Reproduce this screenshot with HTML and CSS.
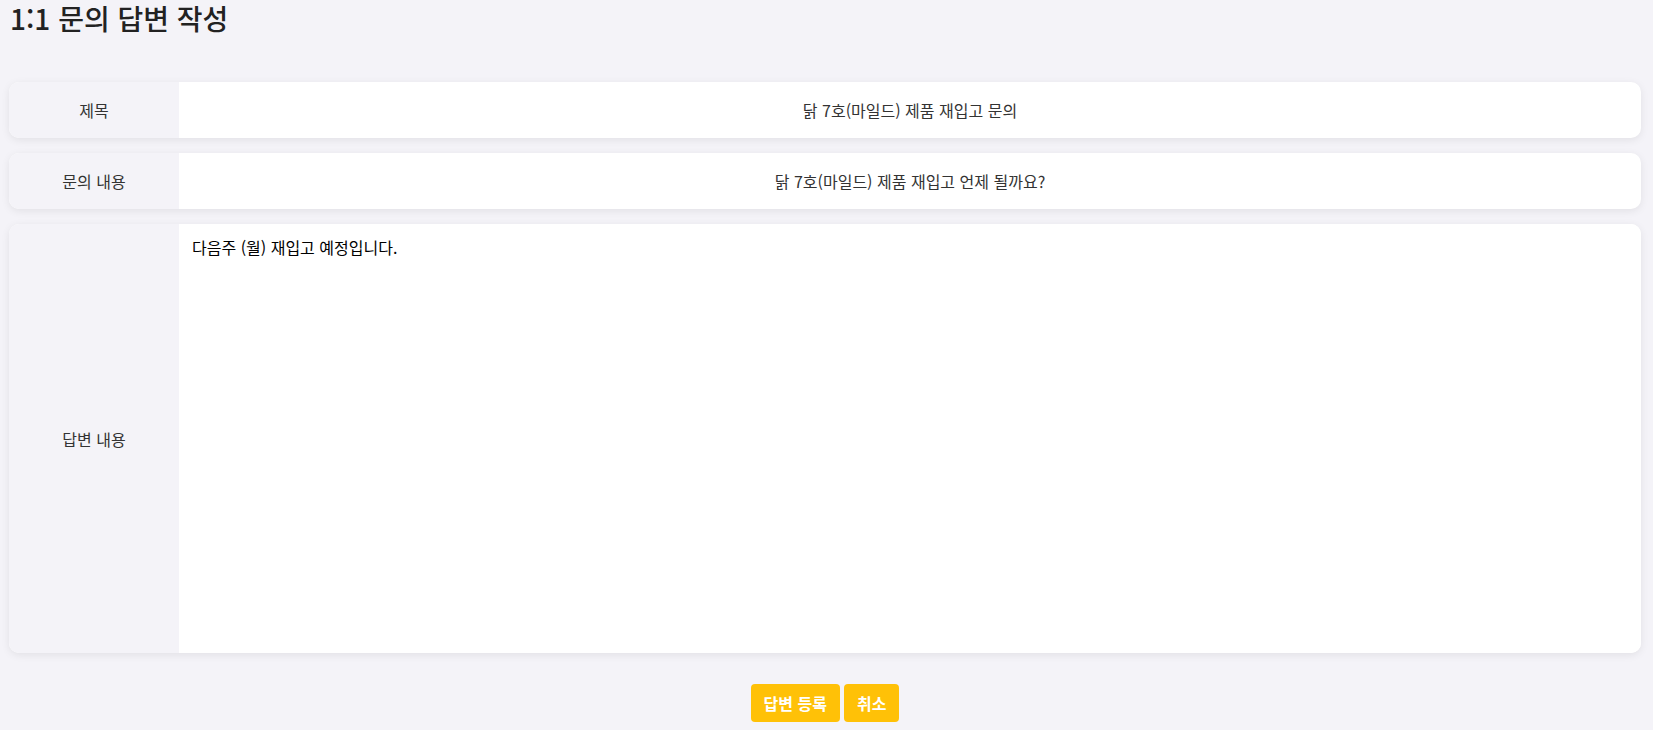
FILE: index.html
```html
<!DOCTYPE html>
<html lang="ko">
<head>
<meta charset="utf-8">
<title>1:1 문의 답변 작성</title>
<link rel="stylesheet" href="styles.css">
</head>
<body>
<div class="page">
  <h2 class="title">1:1 문의 답변 작성</h2>
  <div class="form">
    <div class="row">
      <div class="label">제목</div>
      <div class="value">닭 7호(마일드) 제품 재입고 문의</div>
    </div>
    <div class="row">
      <div class="label">문의 내용</div>
      <div class="value">닭 7호(마일드) 제품 재입고 언제 될까요?</div>
    </div>
    <div class="row row-tall">
      <div class="label">답변 내용</div>
      <textarea class="answer">다음주 (월) 재입고 예정입니다.</textarea>
    </div>
  </div>
  <div class="actions">
    <button class="btn" type="button">답변 등록</button>
    <button class="btn" type="button">취소</button>
  </div>
</div>
</body>
</html>
```

FILE: styles.css
```css
html, body {
  margin: 0;
  padding: 0;
  background: #f4f3f8;
}
body {
  font-family: "Noto Sans CJK KR", "Noto Sans", sans-serif;
  color: #333;
}
.page {
  display: flex;
  flex-direction: column;
  padding: 0 12px 0 9px;
}
.title {
  margin: 0;
  padding-left: 1px;
  font-size: 28px;
  font-weight: 500;
  line-height: 36px;
  color: #222;
  height: 82px;
  box-sizing: border-box;
}
.form {
  display: flex;
  flex-direction: column;
  gap: 15px;
}
.row {
  display: flex;
  height: 56px;
  background: #fff;
  border-radius: 10px;
  overflow: hidden;
  box-shadow: 0 2px 8px rgba(0, 0, 0, 0.08);
}
.row-tall {
  height: 429px;
}
.label {
  width: 170px;
  flex: none;
  background: #f4f3f8;
  display: flex;
  align-items: center;
  justify-content: center;
  font-size: 16px;
  color: #333;
}
.value {
  flex: 1;
  display: flex;
  align-items: center;
  justify-content: center;
  font-size: 16px;
  color: #333;
}
.answer {
  flex: 1;
  border: none;
  outline: none;
  resize: none;
  padding: 11px 13px;
  font-family: "Noto Sans CJK KR", "Noto Sans", sans-serif;
  font-size: 16px;
  line-height: 1.5;
  color: #000;
  background: #fff;
}
.actions {
  display: flex;
  justify-content: center;
  gap: 4px;
  margin-top: 31px;
}
.btn {
  height: 38px;
  padding: 0 13px;
  border: none;
  border-radius: 4px;
  background: #ffc107;
  color: #fff;
  font-family: "Noto Sans CJK KR", "Noto Sans", sans-serif;
  font-size: 16px;
  font-weight: 700;
}
```
